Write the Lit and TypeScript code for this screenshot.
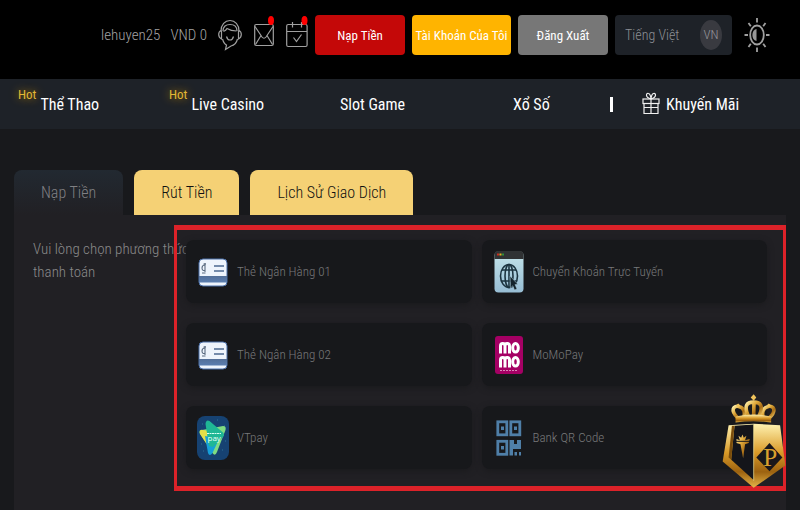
import { LitElement, html, css, svg, nothing } from "lit";
import { customElement, state } from "lit/decorators.js";
import { classMap } from "lit/directives/class-map.js";

const supportIcon = html`<svg width="24" height="32" viewBox="0 0 24 32" class="line" aria-hidden="true">
  <path d="M3 12C3 5.500 7 1.500 12 1.500S21 5.500 21 12" />
  <path d="M5 12C5 7.500 8 5.500 12 5.500S19 7.500 19 12" />
  <path d="M3 11.500Q.7 12.500.7 15.500T3.500 20V11.500M21 11.500Q23.300 12.500 23.300 15.500T20.500 20V11.500" />
  <path d="M4.500 20Q6 25 8.500 26L7.500 30.500 13 27Q18 26 19.500 20" />
  <path d="M8.500 17.500Q9.500 21 12 21T15.500 17.500" />
  <path d="M5.500 12.500Q8 11.500 9 9.500 13 12 18.500 12" />
</svg>`;

const mailIcon = html`<svg width="20" height="32" viewBox="0 0 20 32" class="line" aria-hidden="true">
  <rect x=".7" y="5.500" width="18.600" height="21" rx="1.500" />
  <path d="M1 7.500 8 18Q10 20.500 12 18L19 7.500M1.500 25.500 7 16.500M18.500 25.500 13 16.500" />
  <ellipse class="dot" cx="17" cy="1.500" rx="3" ry="4.500" />
</svg>`;

const calendarIcon = html`<svg width="22" height="32" viewBox="0 0 22 32" class="line" aria-hidden="true">
  <rect x=".7" y="5.500" width="20.400" height="22" rx="1.500" />
  <path d="M1 12.500H21M6.500 3V8.500M15.500 3V8.500M7.500 18.500 10.500 22.500 15.500 15.500" />
  <ellipse class="dot" cx="18.500" cy="1.500" rx="3" ry="4.500" />
</svg>`;

const themeIcon = html`<svg width="26" height="36" viewBox="0 0 26 36" class="line sun" aria-hidden="true">
  <ellipse cx="13" cy="18" rx="6.800" ry="9.500" />
  <path class="half" d="M12.500 12C7 12.500 7 23.500 12.500 24Z" />
  <path d="M13 1V5.500M13 30.500V35M.5 18H4M22 18H25.500M4.500 6 6.800 9.300M21.500 6 19.200 9.300M4.500 30 6.800 26.700M21.500 30 19.200 26.700" />
</svg>`;

const giftIcon = html`<svg width="18" height="24" viewBox="0 0 18 24" class="line gift" aria-hidden="true">
  <rect x="1" y="7" width="16" height="4.500" />
  <path d="M2 11.500V21.500H16V11.500M9 7V21.500M2 15.500H16" />
  <path d="M9 7Q4.500 5.500 4.500 3.200T6.500 1.500Q8.500 2 9 7Q9.500 2 11.500 1.500T13.500 3.200 9 7" />
</svg>`;

const cardArt = svg`
  <defs><linearGradient id="stripe" x1="0" y1="0" x2="0" y2="1"><stop stop-color="#536f98"/><stop offset="1" stop-color="#5b7eb0"/></linearGradient></defs>
  <rect x="2" y="9" width="28" height="27" rx="4" fill="#eef4fc" stroke="#4a6ea8"/>
  <rect x="2" y="26" width="28" height="6.500" fill="url(#stripe)"/>
  <path d="M17 16H27M17 21H27" stroke="#4c6890" stroke-width="1.600"/>
  <path d="M8 13V22M8 15Q5 15 5 18T8 20.500M5 23H8.500M6.500 14H9" stroke="#5c6c80" fill="none" stroke-width="1.100"/>`;

const browserArt = svg`
  <defs><linearGradient id="page" x1="0" y1="0" x2="0" y2="1"><stop stop-color="#c4e4ea"/><stop offset="1" stop-color="#97bdd4"/></linearGradient></defs>
  <rect x="1.500" y="1.500" width="29" height="41" rx="4" fill="url(#page)"/>
  <path d="M1.500 9V5Q1.500 1 5 1H27Q30.500 1 30.500 5V9Z" fill="#303234"/>
  <path d="M4 4.500H6" stroke="#c62c20" stroke-width="2"/><path d="M6.500 4.500H8.500" stroke="#e6b41e" stroke-width="2"/><path d="M9 4.500H11" stroke="#2f8f3a" stroke-width="2"/>
  <g fill="none" stroke="#1c3440" stroke-width="1.600"><ellipse cx="16" cy="26" rx="8.500" ry="11.500"/><ellipse cx="16" cy="26" rx="4" ry="11.500"/><path d="M16 14.500V37.500M9 20H23M9 31H23"/></g>
  <path d="M17 26 25 34.500 22 34.500 24 39 21.500 40 19.800 35.800 17.500 38Z" fill="#14242c" stroke="#b0d2e0" stroke-width=".5"/>`;

const momoArt = svg`
  <rect x="2" y="3" width="28" height="38" rx="3" fill="#a50064"/>
  <g fill="none" stroke="#fff" stroke-width="3">
    <path d="M7.500 20.500V13Q7.500 10.500 9.700 10.500T12 13V20.500M12 13Q12 10.500 14.200 10.500T16.500 13V20.500"/>
    <ellipse cx="22.500" cy="14.800" rx="2.800" ry="4.300"/>
    <path d="M7.500 34.500V27Q7.500 24.500 9.700 24.500T12 27V34.500M12 27Q12 24.500 14.200 24.500T16.500 27V34.500"/>
    <ellipse cx="22.500" cy="28.800" rx="2.800" ry="4.300"/>
  </g>
  <path d="M7 37.500H25" stroke="#d888b8" stroke-dasharray="2 1"/>`;

const vtpayArt = svg`
  <rect width="32" height="44" rx="8" fill="#164272"/>
  <path d="M5 8H6M27 10H28M25 34H26M6 35H7M28 25H29M4 28H5M20 4H21" stroke="#2c7296"/>
  <path d="M2.500 17Q2 13.500 5 14L26 10Q29.500 10 28.500 14L20 36Q18 41 15.500 37Z" fill="#7fdc82"/>
  <path d="M3 18Q2 13 6 14L11 15 9 27Z" fill="#e4df48"/>
  <path d="M8 20 11 37Q12.500 41 15.500 37L22 23Z" fill="#169fd9"/>
  <path d="M8.500 8Q9 3 12.500 5L26 16.500Q28 19 26 21L16 31 12 30Z" fill="#1fb795"/>
  <path d="M10 17.500H24" stroke="#d8fff4" stroke-dasharray="2 .5"/>
  <text x="10.500" y="25" class="paymark">pay</text>`;

const qrArt = svg`
  <g fill="none" stroke="#4f7fa8" stroke-width="2.800"><rect x="4.800" y="5.800" width="9" height="13"/><rect x="17.800" y="5.800" width="9" height="13"/><rect x="4.800" y="25.300" width="9" height="13"/></g>
  <path d="M8 10.500H11V14H8ZM21 10.500H24V14H21ZM8 30H11V33.500H8ZM16.500 24H21V28H24V24H28V33H20V39.500H16.500ZM21.500 36H24V39.500H21.500ZM26 36H28V39.500H26Z" fill="#4f7fa8"/>`;

const crest = html`<svg class="crest" viewBox="64 42 194 288" role="img" aria-label="P">
  <defs>
    <linearGradient id="gold" x1="0" y1="0" x2="1" y2="1"><stop stop-color="#fff0a8"/><stop offset=".35" stop-color="#e0aa3c"/><stop offset=".65" stop-color="#a86c14"/><stop offset="1" stop-color="#f2cc68"/></linearGradient>
    <linearGradient id="goldDown" x1="0" y1="0" x2="0" y2="1"><stop stop-color="#fff2b0"/><stop offset=".45" stop-color="#d99a28"/><stop offset=".75" stop-color="#9c6210"/><stop offset="1" stop-color="#e6b648"/></linearGradient>
  </defs>
  <path d="M84 138 160 134 240 138 256 260 160 328 66 248Z" fill="url(#goldDown)"/>
  <path d="M102 140 160 136V304L92 243Z" fill="#14151a"/>
  <path d="M102 140 92 243 84 236 94 140Z" fill="#7a4d0c"/>
  <path d="M160 136V306" stroke="#fff0a0" stroke-width="2"/>
  <path d="M108 180 118 184 114 170 122 176 126 166 130 176 138 170 134 184 148 180 145 192 134 196 128 238 120 196 108 192Z" fill="url(#gold)"/>
  <path d="M104 187H152" stroke="#14151a" stroke-width="3"/>
  <path d="M208 192 247 236 208 278 168 236Z" fill="#19171a"/>
  <text x="189" y="262" class="initial">P</text>
  <g fill="none" stroke="url(#gold)" stroke-width="11">
    <path d="M112 116C88 94 98 76 117 82 132 86 134 102 130 114"/>
    <path d="M207 116C231 94 221 76 202 82 187 86 185 102 189 114"/>
    <path d="M146 114C128 78 140 68 160 68S192 78 174 114M161 68 160 114"/>
  </g>
  <path d="M105 112Q160 100 213 112V130Q160 122 105 130Z" fill="url(#goldDown)"/>
  <path d="M160 44 168 54 160 64 151 54ZM113 72 119 78 113 84 107 78ZM206 72 212 78 206 84 200 78Z" fill="#f0c45c"/>
</svg>`;

const methods = [
  { label: "Thẻ Ngân Hàng 01", art: cardArt },
  { label: "Chuyển Khoản Trực Tuyến", art: browserArt },
  { label: "Thẻ Ngân Hàng 02", art: cardArt },
  { label: "MoMoPay", art: momoArt },
  { label: "VTpay", art: vtpayArt },
  { label: "Bank QR Code", art: qrArt },
];

const links = [
  { label: "Thể Thao", hot: true },
  { label: "Live Casino", hot: true },
  { label: "Slot Game", hot: false },
  { label: "Xổ Số", hot: false },
];

const tabs = ["Nạp Tiền", "Rút Tiền", "Lịch Sử Giao Dịch"];

@customElement("app-root")
export class AppRoot extends LitElement {
  @state() private tab = 0;

  static styles = css`
    :host {
      display: flex;
      flex-direction: column;
      min-height: 100vh;
      background: #18191c;
      color: #8a8a8a;
      font-family: "Roboto Condensed", "Liberation Sans Narrow", "Open Sans", sans-serif;
      font-size: 15px;
      font-weight: 300;
    }
    * { box-sizing: border-box; }
    button, select { font: inherit; border: 0; cursor: pointer; }
    a { color: inherit; text-decoration: none; }
    svg { display: block; flex: none; overflow: visible; }
    .line { fill: none; stroke: #a0a0a0; stroke-width: 1.2; }
    .line .dot { fill: #f00; stroke: none; }
    .sun { stroke-width: 1.8; }
    .sun .half { fill: #999; stroke: none; }
    .gift { stroke: #f0f0f0; stroke-width: 1.2; }
    .top {
      display: flex;
      justify-content: flex-end;
      align-items: center;
      gap: 7px;
      padding: 15px 30px 24px 14px;
      background: #000;
    }
    .account { display: flex; gap: 10px; margin-right: 4px; color: #a4a4a4; white-space: nowrap; }
    .icons { display: flex; gap: 12px; }
    .icon { padding: 0; background: none; }
    .action { width: 90px; height: 40px; padding: 0; border-radius: 4px; color: #fff; font-size: 13px; font-weight: 400; white-space: nowrap; }
    .deposit { background: #c40808; }
    .mine { width: 99px; background: #ffb400; }
    .logout { background: #777; }
    .language { position: relative; width: 117px; height: 40px; margin-right: 5px; }
    .language select {
      appearance: none;
      width: 100%;
      height: 100%;
      padding: 0 10px;
      border-radius: 4px;
      background: #1e2228;
      color: #8c8f94;
      font-size: 14px;
    }
    .code {
      position: absolute;
      top: 5px;
      right: 10px;
      width: 22px;
      height: 30px;
      border-radius: 50%;
      background: #393a40;
      color: #98989c;
      font-size: 13px;
      line-height: 30px;
      text-align: center;
      pointer-events: none;
    }
    .nav {
      display: grid;
      grid-template-columns: 151fr 171fr 173fr 97fr 32fr 158fr;
      align-items: center;
      height: 50px;
      padding-left: 18px;
      background: #1e2228;
      color: #fff;
      font-size: 16px;
      font-weight: 400;
      white-space: nowrap;
    }
    .link { display: flex; align-items: center; gap: 4px; }
    .promo { gap: 6px; }
    .hot { margin-bottom: 18px; color: #e2b735; font-size: 13px; line-height: 18px; text-shadow: 0 0 8px #c08a00; }
    .bar { width: 3px; height: 15px; background: #fff; }
    .tabs { display: flex; gap: 11px; margin: 41px 14px 0; }
    .tab {
      height: 45px;
      padding: 0 27px;
      border-radius: 8px 8px 0 0;
      background: #f5d175;
      color: #111;
      font-size: 16px;
      white-space: nowrap;
    }
    .current { background: linear-gradient(#222931, #212024); color: #808083; }
    .panel { flex: 1; display: flex; margin: 0 14px; background: #212024; }
    .prompt { flex: none; width: 160px; margin: 0; padding: 23px 0 0 19px; line-height: 23px; white-space: pre; }
    .frame { position: relative; flex: 1; align-self: flex-start; margin: 10px 0 19px; padding: 10px 16px 17px 9px; border: solid #dc2229; border-width: 5px 3px; }
    .methods { display: grid; grid-template-columns: 1fr 1fr; gap: 20px 10px; }
    .method {
      display: flex;
      align-items: center;
      gap: 8px;
      height: 63px;
      padding: 0 11px;
      border-radius: 8px;
      background: #17181b;
      box-shadow: 0 2px 6px #1a1a1d;
      color: #77787a;
      font-size: 13px;
      white-space: nowrap;
    }
    .paymark { fill: #e8fff8; font: 8px "Open Sans", sans-serif; }
    .initial { fill: #d9a02e; font: 76px "Liberation Serif", serif; }
    .crest { position: absolute; right: -3px; bottom: -3px; width: 64px; height: 96px; pointer-events: none; }
  `;

  render() {
    return html`
      <header class="top">
        <div class="account"><span>lehuyen25</span><span>VND 0</span></div>
        <div class="icons">
          <button class="icon" aria-label="Hỗ trợ">${supportIcon}</button>
          <button class="icon" aria-label="Hộp thư">${mailIcon}</button>
          <button class="icon" aria-label="Điểm danh">${calendarIcon}</button>
        </div>
        <button class="action deposit">Nạp Tiền</button>
        <button class="action mine">Tài Khoản Của Tôi</button>
        <button class="action logout">Đăng Xuất</button>
        <div class="language">
          <select aria-label="Ngôn ngữ"><option>Tiếng Việt</option></select>
          <span class="code">VN</span>
        </div>
        <button class="icon" aria-label="Giao diện">${themeIcon}</button>
      </header>
      <nav class="nav">
        ${links.map((l) => html`<a class="link" href="#">${l.hot ? html`<span class="hot">Hot</span>` : nothing}<span>${l.label}</span></a>`)}
        <span class="bar"></span>
        <a class="link promo" href="#">${giftIcon}<span>Khuyến Mãi</span></a>
      </nav>
      <div class="tabs" role="tablist">
        ${tabs.map((t, i) => html`<button role="tab" aria-selected=${i === this.tab} class=${classMap({ tab: true, current: i === this.tab })} @click=${() => (this.tab = i)}>${t}</button>`)}
      </div>
      <main class="panel">
        <p class="prompt">Vui lòng chọn phương thức<br />thanh toán</p>
        <section class="frame">
          <div class="methods">
            ${methods.map((m) => html`<button class="method"><svg width="32" height="44" viewBox="0 0 32 44" aria-hidden="true">${m.art}</svg><span>${m.label}</span></button>`)}
          </div>
          ${crest}
        </section>
      </main>
    `;
  }
}
